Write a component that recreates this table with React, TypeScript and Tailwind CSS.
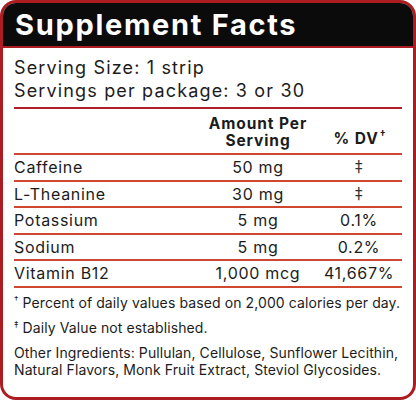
import React from "react";

const rows = [
  { name: "Caffeine", amt: "50 mg", dv: "‡" },
  { name: "L-Theanine", amt: "30 mg", dv: "‡" },
  { name: "Potassium", amt: "5 mg", dv: "0.1%" },
  { name: "Sodium", amt: "5 mg", dv: "0.2%" },
  { name: "Vitamin B12", amt: "1,000 mcg", dv: "41,667%" },
];

export default function App() {
  return (
    <div
      className="w-[416px] h-[400px] bg-white text-[#1c1c1c]"
      style={{ fontFamily: "Inter, 'Open Sans', sans-serif" }}
    >
      <div className="w-full h-full border-[3px] border-[#ad1c21] rounded-[16px] overflow-hidden flex flex-col">
        <div className="bg-[#0b0b0b] h-[45px] border-b-[2px] border-[#ad1c21] flex items-center px-[12px]">
          <h1 className="text-white font-bold text-[29px] leading-none tracking-[1.7px]">Supplement Facts</h1>
        </div>
        <div className="px-[11px] flex flex-col">
          <div className="pt-[8px] pb-[5px] text-[18px] leading-[23px] tracking-[1.15px]">
            <div>Serving Size: 1 strip</div>
            <div>Servings per package: 3 or 30</div>
          </div>
          <div className="border-t-[2px] border-[#b01f23]" />
          <div className="flex items-end h-[44px] pb-[4px] font-bold text-[15.5px] leading-[17px] tracking-[0.9px]">
            <div className="flex-1" />
            <div className="w-[116px] text-center">Amount Per<br />Serving</div>
            <div className="w-[86px] text-center pl-[2px]">
              % DV<span className="text-[10px] relative -top-[6px] ml-[1px]">†</span>
            </div>
          </div>
          {rows.map((r) => (
            <div key={r.name} className="border-t-[2px] border-[#cf4631] h-[26.5px] flex items-center text-[16px] tracking-[0.7px]">
              <div className="flex-1">{r.name}</div>
              <div className="w-[116px] text-center">{r.amt}</div>
              <div
                className={r.dv === "‡" ? "w-[86px] text-center text-[#333] text-[15px]" : "w-[86px] text-center"}
                style={r.dv === "‡" ? { fontFamily: "'DejaVu Sans', sans-serif" } : undefined}
              >
                {r.dv}
              </div>
            </div>
          ))}
          <div className="border-t-[2px] border-[#cf4631]" />
          <div className="pt-[6px] text-[14px] leading-[17px] tracking-[0.1px]">
            <div className="h-[25px]"><span className="text-[9px] relative -top-[5px]">†</span> Percent of daily values based on 2,000 calories per day.</div>
            <div className="h-[25px]"><span className="text-[9px] relative -top-[5px]">‡</span> Daily Value not established.</div>
            <div>Other Ingredients: Pullulan, Cellulose, Sunflower Lecithin, Natural Flavors, Monk Fruit Extract, Steviol Glycosides.</div>
          </div>
        </div>
      </div>
    </div>
  );
}
